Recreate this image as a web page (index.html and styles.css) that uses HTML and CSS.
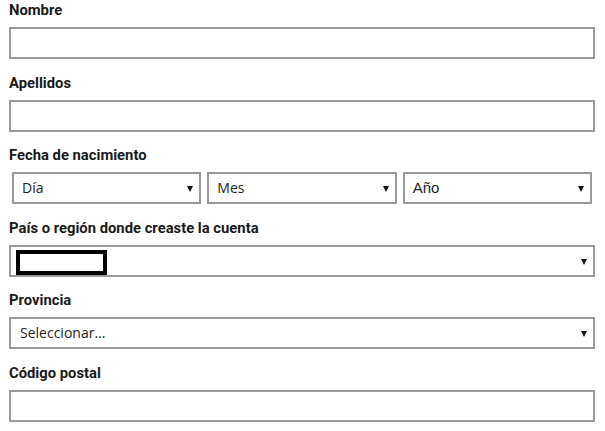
FILE: index.html
```html
<!DOCTYPE html>
<html lang="es">
<head>
<meta charset="utf-8">
<title>Formulario</title>
<link rel="stylesheet" href="styles.css">
</head>
<body>
<form class="form">
  <div class="field">
    <label class="label">Nombre</label>
    <input class="input" type="text">
  </div>
  <div class="field">
    <label class="label">Apellidos</label>
    <input class="input" type="text">
  </div>
  <div class="field">
    <label class="label">Fecha de nacimiento</label>
    <div class="date-row">
      <div class="col"><div class="select select-date"><span class="value">Día</span></div></div>
      <div class="col"><div class="select select-date"><span class="value">Mes</span></div></div>
      <div class="col"><div class="select select-date"><span class="value value-arial">Año</span></div></div>
    </div>
  </div>
  <div class="field">
    <label class="label">País o región donde creaste la cuenta</label>
    <div class="select"><span class="redacted"></span></div>
  </div>
  <div class="field">
    <label class="label">Provincia</label>
    <div class="select"><span class="value">Seleccionar...</span></div>
  </div>
  <div class="field">
    <label class="label">Código postal</label>
    <input class="input" type="text">
  </div>
</form>
</body>
</html>
```
FILE: styles.css
```css
html, body {
  margin: 0;
  padding: 0;
  background: #ffffff;
}
.form {
  padding: 0 10px 0 9px;
  display: flex;
  flex-direction: column;
}
.field {
  display: flex;
  flex-direction: column;
  height: 72.6px;
}
.label {
  display: block;
  height: 20px;
  margin-bottom: 7px;
  font-family: Roboto, "Liberation Sans", sans-serif;
  font-weight: 700;
  font-size: 14.8px;
  line-height: 20px;
  color: #1a1a1a;
}
.input {
  box-sizing: border-box;
  display: block;
  width: 100%;
  height: 32px;
  margin: 0;
  padding: 0 10px;
  border: 2px solid #999999;
  background: #ffffff;
  outline: none;
  font-size: 15px;
}
.date-row {
  display: grid;
  grid-template-columns: 1fr 1fr 1fr;
}
.col {
  padding: 0 3px;
}
.select {
  position: relative;
  box-sizing: border-box;
  height: 32px;
  border: 2px solid #999999;
  background: #ffffff;
  display: flex;
  align-items: center;
  padding: 0 9px;
}
.select-date {
  padding: 0 8px;
}
.select::after {
  content: "";
  position: absolute;
  right: 6px;
  top: 12px;
  width: 0;
  height: 0;
  border-left: 3px solid transparent;
  border-right: 3px solid transparent;
  border-top: 6px solid #111111;
}
.value {
  font-family: "Open Sans", "Noto Sans", sans-serif;
  font-size: 14px;
  color: #222222;
  line-height: 20px;
}
.value-arial {
  font-family: "Liberation Sans", Arial, sans-serif;
  font-size: 15px;
}
.redacted {
  box-sizing: border-box;
  width: 91px;
  height: 25px;
  border: 4px solid #000000;
  background: #ffffff;
  margin-left: -4px;
  margin-top: 3px;
}
```
